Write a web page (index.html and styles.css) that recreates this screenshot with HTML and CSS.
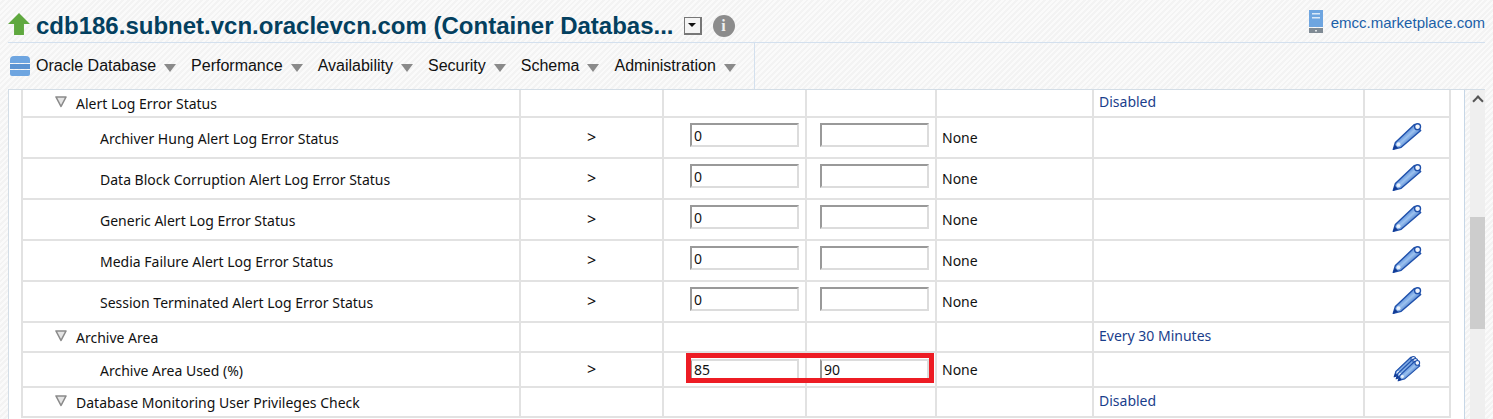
FILE: index.html
```html
<!DOCTYPE html>
<html lang="en">
<head>
  <meta charset="UTF-8" />
  <title>cdb186 - Metric and Collection Settings</title>
  <link rel="stylesheet" href="styles.css">
</head>
<body>

<svg class="defs" width="0" height="0" aria-hidden="true">
  <defs>
    <linearGradient id="pencil-fill" x1="0" y1="0" x2="1" y2="1">
      <stop offset="0.32" stop-color="#3f78d2" />
      <stop offset="0.5" stop-color="#9cc2ef" />
      <stop offset="0.7" stop-color="#2f66c0" />
    </linearGradient>
    <symbol id="pencil" viewBox="0.500 2 28 26.500">
      <path d="M1.500 27 L3.500 20.500 L21.500 3.500 L27.500 9 L9 25 Z" fill="url(#pencil-fill)" stroke="#1f50aa" stroke-width="1.300" stroke-linejoin="round" />
      <path d="M1 27.500 L3 22.500 L6 25.500 Z" fill="#123a94" />
      <circle cx="6.500" cy="22" r="1.800" fill="#e8f0fb" />
      <circle cx="24.500" cy="5.500" r="2.800" fill="#f2f6fc" stroke="#1f50aa" stroke-width="1.300" />
    </symbol>
    <symbol id="twist" viewBox="0 0 12 12">
      <path d="M1 1 L11 1 L6 10.500 Z" fill="#e4e4e4" stroke="#8a8a8a" stroke-width="1.600" stroke-linejoin="round" />
    </symbol>
  </defs>
</svg>

<header class="title-bar">
  <div class="title-left">
    <svg class="status-up" width="22" height="22" viewBox="1 1 20 20">
      <path d="M11 1 L21 11 L15.500 11 L15.500 21 L6.500 21 L6.500 11 L1 11 Z" fill="#5fa83f" />
    </svg>
    <h1>cdb186.subnet.vcn.oraclevcn.com (Container Databas...</h1>
    <span class="drop-box"><span class="drop-arrow"></span></span>
    <span class="info-icon">i</span>
  </div>
  <a class="host-link" href="#">
    <svg width="14" height="23" viewBox="0 0 14 23">
      <rect width="14" height="17" fill="#6ea5e0" />
      <rect x="3" y="3" width="8" height="1.500" fill="#dbe9f8" />
      <rect x="3" y="7" width="8" height="1.500" fill="#dbe9f8" />
      <rect y="18" width="14" height="5" fill="#7f8a94" />
      <rect x="6" y="20" width="2" height="1.500" fill="#dfe3e6" />
    </svg>
    <span class="host-name">emcc.marketplace.com</span>
  </a>
</header>

<nav class="menu-bar">
  <ul class="menu">
    <li class="menu-first">
      <svg width="20" height="20" viewBox="0 0 20 20">
        <path d="M0 4 Q0 0 4 0 L16 0 Q20 0 20 4 L20 7 L0 7 Z" fill="#6ea5e0" />
        <rect y="8" width="20" height="5" fill="#5d94d2" />
        <path d="M0 14 L20 14 L20 18 Q20 20 18 20 L2 20 Q0 20 0 18 Z" fill="#6ea5e0" />
      </svg>
      Oracle Database<span class="caret"></span>
    </li>
    <li>Performance<span class="caret"></span></li>
    <li>Availability<span class="caret"></span></li>
    <li>Security<span class="caret"></span></li>
    <li>Schema<span class="caret"></span></li>
    <li>Administration<span class="caret"></span></li>
  </ul>
</nav>

<section class="panel">
  <div class="table-wrap">
    <table class="metrics">
      <colgroup>
        <col class="c-name"><col class="c-op"><col class="c-warn"><col class="c-crit">
        <col class="c-action"><col class="c-sched"><col class="c-edit">
      </colgroup>
      <tr class="group g-first">
        <td class="group-name"><svg class="twist"><use href="#twist" /></svg>Alert Log Error Status</td>
        <td></td><td></td><td></td><td></td>
        <td class="sched">Disabled</td><td></td>
      </tr>
      <tr class="metric">
        <td class="metric-name">Archiver Hung Alert Log Error Status</td>
        <td class="op">&gt;</td>
        <td class="warn"><input class="thresh" value="0"></td>
        <td class="crit"><input class="thresh"></td>
        <td>None</td><td></td>
        <td class="edit"><svg class="pencil"><use href="#pencil" /></svg></td>
      </tr>
      <tr class="metric">
        <td class="metric-name">Data Block Corruption Alert Log Error Status</td>
        <td class="op">&gt;</td>
        <td class="warn"><input class="thresh" value="0"></td>
        <td class="crit"><input class="thresh"></td>
        <td>None</td><td></td>
        <td class="edit"><svg class="pencil"><use href="#pencil" /></svg></td>
      </tr>
      <tr class="metric">
        <td class="metric-name">Generic Alert Log Error Status</td>
        <td class="op">&gt;</td>
        <td class="warn"><input class="thresh" value="0"></td>
        <td class="crit"><input class="thresh"></td>
        <td>None</td><td></td>
        <td class="edit"><svg class="pencil"><use href="#pencil" /></svg></td>
      </tr>
      <tr class="metric">
        <td class="metric-name">Media Failure Alert Log Error Status</td>
        <td class="op">&gt;</td>
        <td class="warn"><input class="thresh" value="0"></td>
        <td class="crit"><input class="thresh"></td>
        <td>None</td><td></td>
        <td class="edit"><svg class="pencil"><use href="#pencil" /></svg></td>
      </tr>
      <tr class="metric">
        <td class="metric-name">Session Terminated Alert Log Error Status</td>
        <td class="op">&gt;</td>
        <td class="warn"><input class="thresh" value="0"></td>
        <td class="crit"><input class="thresh"></td>
        <td>None</td><td></td>
        <td class="edit"><svg class="pencil"><use href="#pencil" /></svg></td>
      </tr>
      <tr class="group">
        <td class="group-name"><svg class="twist"><use href="#twist" /></svg>Archive Area</td>
        <td></td><td></td><td></td><td></td>
        <td class="sched">Every 30 Minutes</td><td></td>
      </tr>
      <tr class="metric metric-short">
        <td class="metric-name">Archive Area Used (%)</td>
        <td class="op">&gt;</td>
        <td class="warn highlighted">
          <input class="thresh thresh-flat" value="85">
          <div class="red-box"></div>
        </td>
        <td class="crit"><input class="thresh thresh-flat" value="90"></td>
        <td>None</td><td></td>
        <td class="edit">
          <span class="pencil-stack">
            <svg class="pencil"><use href="#pencil" /></svg>
            <svg class="pencil"><use href="#pencil" /></svg>
            <svg class="pencil"><use href="#pencil" /></svg>
          </span>
        </td>
      </tr>
      <tr class="group">
        <td class="group-name"><svg class="twist"><use href="#twist" /></svg>Database Monitoring User Privileges Check</td>
        <td></td><td></td><td></td><td></td>
        <td class="sched">Disabled</td><td></td>
      </tr>
    </table>
  </div>
  <div class="scroll">
    <span class="scroll-up"></span>
    <div class="scroll-thumb"></div>
  </div>
</section>

</body>
</html>
```

FILE: styles.css
```css
html, body {
  height: 100%;
  overflow: hidden;
}

body {
  margin: 0;
  padding: 0 8px;
  font-family: "Liberation Sans", Arial, sans-serif;
  color: #111;
  background: repeating-linear-gradient(135deg, #fafafa 0 2px, #f3f3f3 2px 4px);
}

.defs {
  position: absolute;
}

.title-bar {
  height: 42px;
  display: flex;
  align-items: center;
  justify-content: space-between;
  border-bottom: 1px solid #d3e0ee;
}

.title-left {
  display: flex;
  align-items: center;
  margin-top: 9px;
}

.status-up {
  margin-right: 6px;
  margin-top: -3px;
}

h1 {
  margin: 0;
  font-size: 24px;
  font-weight: bold;
  color: #03405f;
}

.drop-box {
  margin-left: 10px;
  width: 18px;
  height: 18px;
  box-sizing: border-box;
  border: 1px solid #777;
  border-right-width: 2px;
  border-bottom-width: 2px;
  background: #f4f4f4;
  display: flex;
  align-items: center;
  justify-content: center;
}

.drop-arrow {
  border-style: solid;
  border-width: 4px 4px 0;
  border-color: #111 transparent transparent;
}

.info-icon {
  margin-left: 11px;
  width: 22px;
  height: 22px;
  border-radius: 50%;
  background: #8c8c8c;
  color: #f0f0f0;
  font: bold 16px/22px "Liberation Serif", serif;
  text-align: center;
}

.host-link {
  display: flex;
  align-items: center;
  gap: 8px;
  font-size: 15px;
  color: #1b5fa8;
  text-decoration: none;
}

.host-name {
  margin-top: 2px;
}

.menu-bar {
  height: 46px;
  border-bottom: 1px solid #d3dde6;
}

.menu {
  display: inline-flex;
  align-items: center;
  height: 46px;
  margin: 0;
  padding: 0 18px 0 2px;
  list-style: none;
  box-sizing: border-box;
  border-right: 1px solid #d3e0ee;
  font-size: 16px;
  gap: 15px;
}

.menu li {
  display: flex;
  align-items: center;
}

.menu-first svg {
  margin-right: 6px;
}

.caret {
  margin-left: 8px;
  margin-top: 3px;
  border-style: solid;
  border-width: 8px 6px 0;
  border-color: #8a8a8a transparent transparent;
}

.panel {
  display: flex;
  height: 340px;
  background: repeating-linear-gradient(135deg, #fafafa 0 2px, #f3f3f3 2px 4px);
}

.table-wrap {
  width: 1457px;
  box-sizing: border-box;
  padding-left: 12px;
  background: #fff;
  border-left: 1px solid #d3dde6;
  border-right: 1px solid #c6d6e6;
  overflow: hidden;
}

.metrics {
  width: 1428px;
  table-layout: fixed;
  border-collapse: collapse;
  font-family: "Noto Sans", sans-serif;
  font-size: 14px;
}

.c-name { width: 498px; }
.c-op { width: 143px; }
.c-warn { width: 143px; }
.c-crit { width: 130px; }
.c-action { width: 157px; }
.c-sched { width: 271px; }
.c-edit { width: 86px; }

.metrics td {
  box-sizing: border-box;
  border: 2px solid #e2e2e2;
  border-width: 0 2px 2px 2px;
  padding: 0 5px;
  vertical-align: middle;
  white-space: nowrap;
}

.group td { height: 30px; }
.g-first td { height: 27px; }
.metric td { height: 41px; }
.metric-short td { height: 35px; }

.metrics .group-name {
  padding-left: 32px;
}

.twist {
  width: 12px;
  height: 12px;
  margin-right: 9px;
  vertical-align: 1px;
}

.metrics .metric-name {
  padding-left: 77px;
  padding-top: 2px;
}

.metrics .op {
  text-align: center;
  font-size: 16px;
  padding-bottom: 2px;
}

.metrics .warn {
  padding: 0 0 0 26px;
}

.metrics .crit {
  padding: 0 0 0 13px;
}

.thresh {
  display: block;
  width: 109px;
  height: 24px;
  margin-bottom: 5px;
  box-sizing: border-box;
  padding: 0 2px;
  border: 2px solid #dcdcdc;
  border-top-color: #999;
  border-left-color: #999;
  font: 14px "Noto Sans", sans-serif;
  color: #111;
  background: #fff;
  outline: none;
}

.thresh-flat {
  height: 22px;
  margin-bottom: 0;
  border-top-color: #dcdcdc;
}

.highlighted {
  position: relative;
}

.red-box {
  position: absolute;
  left: 22px;
  top: 0;
  width: 238px;
  height: 20px;
  border: 5px solid #ed1c24;
}

.metrics .sched {
  color: #1a3e8c;
  padding-bottom: 3px;
}

.pencil {
  display: block;
  width: 30px;
  height: 28px;
  margin: 0 auto 2px;
}

.pencil-stack {
  position: relative;
  display: block;
  width: 28px;
  height: 26px;
  margin: 0 auto 2px;
}

.pencil-stack .pencil {
  position: absolute;
  left: 0;
  top: 0;
  width: 24px;
  height: 22px;
  margin: 0;
}

.pencil-stack .pencil:nth-child(2) {
  left: 2px;
  top: 2px;
}

.pencil-stack .pencil:nth-child(3) {
  left: 4px;
  top: 4px;
}

.scroll {
  width: 15px;
  margin-left: 5px;
  background: #efefef;
  position: relative;
}

.scroll-up {
  display: block;
  width: 6px;
  height: 6px;
  margin: 7px auto 0;
  border: solid #555;
  border-width: 2px 0 0 2px;
  transform: rotate(45deg);
}

.scroll-thumb {
  position: absolute;
  left: 0;
  right: 0;
  top: 127px;
  height: 112px;
  background: #cdcdcd;
}
```
